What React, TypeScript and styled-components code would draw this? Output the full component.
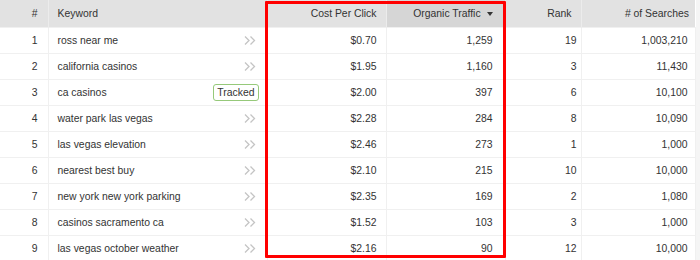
import React from "react";
import styled, { createGlobalStyle } from "styled-components";

const GlobalStyle = createGlobalStyle`
  html, body {
    margin: 0;
    padding: 0;
    background: #f5f5f5;
    font-family: "Liberation Sans", Arial, sans-serif;
  }
`;

type Row = {
    keyword: string;
    cpc: string;
    traffic: string;
    rank: number;
    searches: string;
    tracked?: boolean;
};

const rows: Row[] = [
    { keyword: "ross near me", cpc: "$0.70", traffic: "1,259", rank: 19, searches: "1,003,210" },
    { keyword: "california casinos", cpc: "$1.95", traffic: "1,160", rank: 3, searches: "11,430" },
    { keyword: "ca casinos", cpc: "$2.00", traffic: "397", rank: 6, searches: "10,100", tracked: true },
    { keyword: "water park las vegas", cpc: "$2.28", traffic: "284", rank: 8, searches: "10,090" },
    { keyword: "las vegas elevation", cpc: "$2.46", traffic: "273", rank: 1, searches: "1,000" },
    { keyword: "nearest best buy", cpc: "$2.10", traffic: "215", rank: 10, searches: "10,000" },
    { keyword: "new york new york parking", cpc: "$2.35", traffic: "169", rank: 2, searches: "1,080" },
    { keyword: "casinos sacramento ca", cpc: "$1.52", traffic: "103", rank: 3, searches: "1,000" },
    { keyword: "las vegas october weather", cpc: "$2.16", traffic: "90", rank: 12, searches: "10,000" },
];

const Chevrons = () => (
    <svg width="12" height="9" viewBox="0 0 12 9" fill="none" stroke="#c4c4c4" strokeWidth="1.3">
        <polyline points="1,0.5 5,4.5 1,8.5" />
        <polyline points="6.5,0.5 10.5,4.5 6.5,8.5" />
    </svg>
);

const App = () => {
    return (
        <>
            <GlobalStyle />
            <Wrapper>
                <Table>
                    <colgroup>
                        <col style={{ width: 48 }} />
                        <col style={{ width: 219 }} />
                        <col style={{ width: 119 }} />
                        <col style={{ width: 119 }} />
                        <col style={{ width: 76 }} />
                        <col style={{ width: 114 }} />
                    </colgroup>
                    <thead>
                        <tr>
                            <Th $pad={10}>#</Th>
                            <Th $align="left">Keyword</Th>
                            <Th $pad={9}>Cost Per Click</Th>
                            <Th $sorted $pad={12}>
                                Organic Traffic <Caret />
                            </Th>
                            <Th $pad={9}>Rank</Th>
                            <Th $pad={6}>
                                # of Searches
                            </Th>
                        </tr>
                    </thead>
                    <tbody>
                        {rows.map((r, i) => (
                            <tr key={r.keyword}>
                                <Td $pad={10}>{i + 1}</Td>
                                <Td $align="left">
                                    <KeywordCell>
                                        <span>{r.keyword}</span>
                                        {r.tracked ? <Tracked>Tracked</Tracked> : <Chevrons />}
                                    </KeywordCell>
                                </Td>
                                <Td $pad={9}>{r.cpc}</Td>
                                <Td $pad={12}>{r.traffic}</Td>
                                <Td $pad={4}>{r.rank}</Td>
                                <Td $pad={7}>{r.searches}</Td>
                            </tr>
                        ))}
                    </tbody>
                </Table>
                <Highlight />
            </Wrapper>
        </>
    );
};

export default App;

const Wrapper = styled.div`
    position: relative;
    width: 700px;
    height: 260px;
    overflow: hidden;
    background: #f5f5f5;
`;

const Table = styled.table`
    width: 695px;
    table-layout: fixed;
    border-collapse: collapse;
    background: #ffffff;
    color: #333333;
    font-size: 10.4px;
`;

const Th = styled.th<{ $align?: string; $sorted?: boolean; $pad?: number }>`
    height: 27px;
    padding: 0 ${(p) => p.$pad ?? 9}px 0 9px;
    text-align: ${(p) => p.$align ?? "right"};
    font-weight: normal;
    background: ${(p) => (p.$sorted ? "#d6d6d6" : "#e2e2e2")};
    border-left: 1px solid #ececec;
    color: #333333;
    white-space: nowrap;

    &:first-child {
        border-left: none;
    }
`;

const Td = styled.td<{ $align?: string; $pad?: number }>`
    height: 26px;
    box-sizing: border-box;
    padding: 0 ${(p) => p.$pad ?? 9}px 0 9px;
    text-align: ${(p) => p.$align ?? "right"};
    border-top: 1px solid #f0f0f0;
    border-left: 1px solid #f0f0f0;
    border-right: 1px solid #f0f0f0;
    white-space: nowrap;

    &:first-child {
        border-left: none;
    }
`;

const KeywordCell = styled.div`
    display: flex;
    align-items: center;
    justify-content: space-between;
    padding-right: 3px;
    margin-right: -4px;

    svg {
        margin-right: 3px;
    }
`;

const Tracked = styled.span`
    display: inline-flex;
    align-items: center;
    height: 15px;
    padding: 0 3px;
    border: 1px solid #96c97a;
    border-radius: 3px;
    background: #ffffff;
    color: #333333;
    font-size: 10.4px;
`;

const Caret = styled.span`
    display: inline-block;
    width: 0;
    height: 0;
    margin-left: 3px;
    vertical-align: middle;
    border-left: 3px solid transparent;
    border-right: 3px solid transparent;
    border-top: 4px solid #333333;
`;

const Highlight = styled.div`
    position: absolute;
    left: 265px;
    top: 1px;
    width: 241px;
    height: 257px;
    box-sizing: border-box;
    border: 3px solid #ff0000;
    border-radius: 1px;
    pointer-events: none;
`;
